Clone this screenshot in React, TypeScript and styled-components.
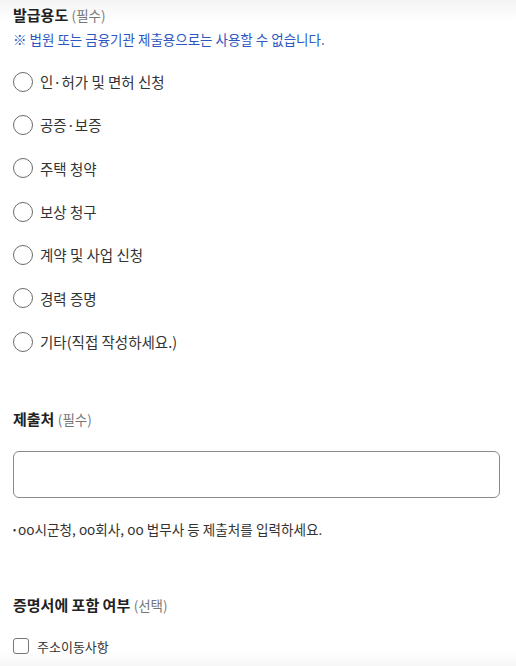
import React from "react";
import styled, { createGlobalStyle } from "styled-components";

const purposes = [
  "인·허가 및 면허 신청",
  "공증·보증",
  "주택 청약",
  "보상 청구",
  "계약 및 사업 신청",
  "경력 증명",
  "기타(직접 작성하세요.)",
];

const GlobalStyle = createGlobalStyle`
  html, body {
    margin: 0;
    padding: 0;
  }
  body {
    min-height: 666px;
    background: linear-gradient(
      to bottom,
      #f3f3f3 0,
      #f8f8f8 8px,
      #ffffff 20px,
      #ffffff 650px,
      #f7f7f7 666px
    );
    font-family: "Noto Sans CJK KR", "Noto Sans", sans-serif;
    color: #222;
  }
`;

export default function App() {
  return (
    <>
      <GlobalStyle />
      <Page>
        <Section>
          <Title>
            발급용도 <Sub>(필수)</Sub>
          </Title>
          <Notice>※ 법원 또는 금융기관 제출용으로는 사용할 수 없습니다.</Notice>
          <RadioList>
            {purposes.map((label) => (
              <RadioRow key={label}>
                <RadioCircle />
                <RadioLabel>{label}</RadioLabel>
              </RadioRow>
            ))}
          </RadioList>
        </Section>

        <Section $top={46}>
          <Title>
            제출처 <Sub>(필수)</Sub>
          </Title>
          <TextInput type="text" />
          <Hint>
            <Bullet>•</Bullet>oo시군청, oo회사, oo 법무사 등 제출처를 입력하세요.
          </Hint>
        </Section>

        <Section $top={56}>
          <Title>
            증명서에 포함 여부 <Sub>(선택)</Sub>
          </Title>
          <CheckRow>
            <CheckBox />
            <CheckLabel>주소이동사항</CheckLabel>
          </CheckRow>
        </Section>
      </Page>
    </>
  );
}

const Page = styled.div`
  padding: 5px 13px 0 13px;
  display: flex;
  flex-direction: column;
`;

const Section = styled.section<{ $top?: number }>`
  display: flex;
  flex-direction: column;
  margin-top: ${(p) => p.$top ?? 0}px;
`;

const Title = styled.h2`
  margin: 0;
  font-size: 15px;
  line-height: 20px;
  font-weight: 700;
  color: #222;
`;

const Sub = styled.span`
  font-size: 13.5px;
  font-weight: 400;
  color: #777;
`;

const Notice = styled.p`
  margin: 4px 0 0 0;
  font-size: 13.5px;
  line-height: 20px;
  color: #2c57c2;
`;

const RadioList = styled.div`
  display: flex;
  flex-direction: column;
  margin-top: 11px;
`;

const RadioRow = styled.label`
  display: flex;
  align-items: center;
  gap: 7px;
  height: 43.33px;
`;

const RadioCircle = styled.span`
  width: 18px;
  height: 18px;
  border: 1px solid #6b6b6b;
  border-radius: 50%;
  background: #fff;
  flex: none;
`;

const RadioLabel = styled.span`
  font-size: 14.5px;
  color: #333;
`;

const TextInput = styled.input`
  margin-top: 22px;
  box-sizing: border-box;
  width: 487px;
  height: 47px;
  border: 1px solid #8a8a8a;
  border-radius: 6px;
  background: #fff;
  outline: none;
  padding: 0 12px;
  font: inherit;
`;

const Hint = styled.p`
  margin: 22px 0 0 0;
  font-size: 13.6px;
  line-height: 18px;
  color: #333;
`;

const Bullet = styled.span`
  font-size: 9px;
  margin-right: 2px;
  vertical-align: 2px;
`;

const CheckRow = styled.label`
  display: flex;
  align-items: center;
  gap: 8px;
  margin-top: 21px;
  height: 20px;
`;

const CheckBox = styled.span`
  box-sizing: border-box;
  width: 16px;
  height: 16px;
  border: 1px solid #777;
  border-radius: 3px;
  background: #fff;
  flex: none;
`;

const CheckLabel = styled.span`
  font-size: 13px;
  color: #333;
`;
